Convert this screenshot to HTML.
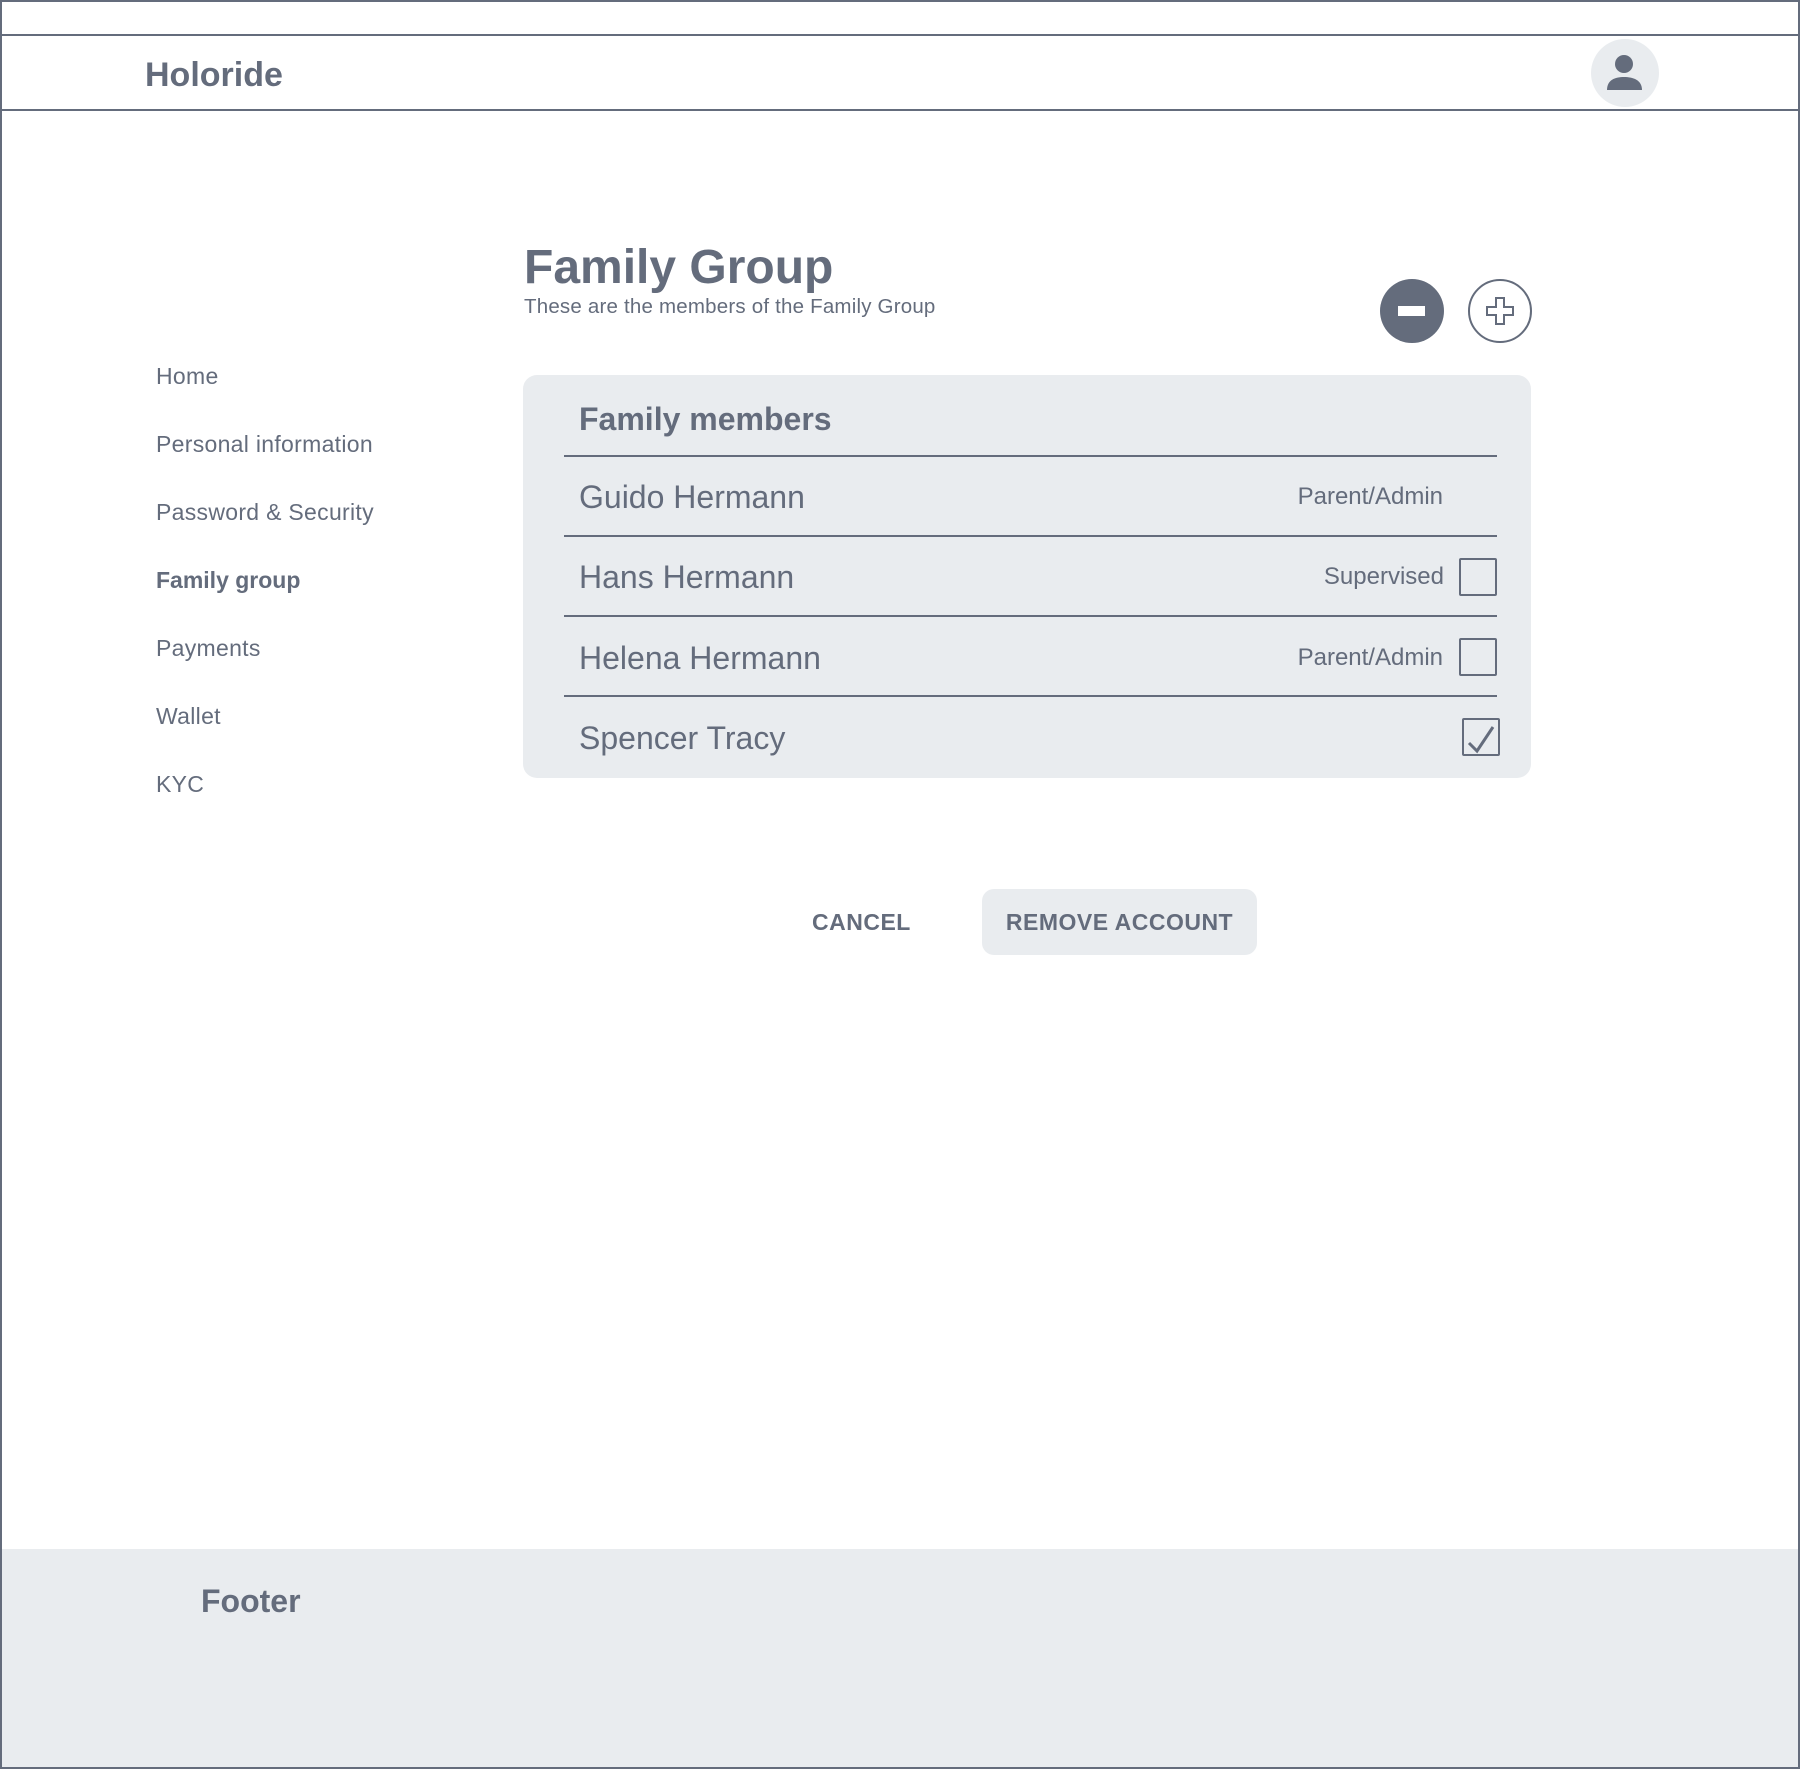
<!DOCTYPE html>
<html><head><meta charset="utf-8"><style>
*{margin:0;padding:0;box-sizing:border-box}
body{width:1800px;height:1769px;position:relative;background:#fff;font-family:"Liberation Sans",Arial,sans-serif;color:#646c7c;overflow:hidden}
.a{position:absolute;white-space:nowrap;line-height:1}
.b{font-weight:bold}
.ln{position:absolute;background:#646c7c}
.cb{position:absolute;width:38px;height:38px;border:2px solid #646c7c;border-radius:2px}
.s{font-size:23px;letter-spacing:0.3px}
</style></head><body>
<div style="position:absolute;left:0;top:0;width:1800px;height:1769px;border:2px solid #646c7c"></div>
<div class="ln" style="left:0;top:34px;width:1800px;height:2px"></div>
<div class="ln" style="left:0;top:109px;width:1800px;height:2px"></div>
<div class="a b" style="left:145px;top:58px;font-size:34px">Holoride</div>
<svg style="position:absolute;left:1591px;top:39px" width="68" height="68" viewBox="0 0 68 68"><circle cx="34" cy="34" r="34" fill="#e9ecef"/><circle cx="33" cy="25" r="9" fill="#646c7c"/><path d="M16 51 C16 41 24 38 33 38 C42 38 51 41 51 51 Z" fill="#646c7c"/></svg>

<div class="a b" style="left:524px;top:244px;font-size:48px">Family Group</div>
<div class="a" style="left:524px;top:297px;font-size:20.5px;letter-spacing:0.2px">These are the members of the Family Group</div>
<svg style="position:absolute;left:1378px;top:277px" width="160" height="68" viewBox="0 0 160 68"><circle cx="34" cy="34" r="32" fill="#646c7c"/><rect x="20" y="29" width="27" height="10" fill="#fff"/><circle cx="122" cy="34" r="31" fill="#fff" stroke="#646c7c" stroke-width="2"/><path d="M118 21 h8 v9 h9 v8 h-9 v9 h-8 v-9 h-9 v-8 h9 z" fill="none" stroke="#646c7c" stroke-width="2"/></svg>

<div class="a s" style="left:156px;top:365px">Home</div>
<div class="a s" style="left:156px;top:433px">Personal information</div>
<div class="a s" style="left:156px;top:501px">Password &amp; Security</div>
<div class="a s b" style="left:156px;top:569px;letter-spacing:0">Family group</div>
<div class="a s" style="left:156px;top:637px">Payments</div>
<div class="a s" style="left:156px;top:705px">Wallet</div>
<div class="a s" style="left:156px;top:773px">KYC</div>

<div style="position:absolute;left:523px;top:375px;width:1008px;height:403px;background:#e9ecef;border-radius:14px"></div>
<div class="a b" style="left:579px;top:403px;font-size:32px">Family members</div>
<div class="ln" style="left:564px;top:455px;width:933px;height:2px"></div>
<div class="ln" style="left:564px;top:535px;width:933px;height:2px"></div>
<div class="ln" style="left:564px;top:615px;width:933px;height:2px"></div>
<div class="ln" style="left:564px;top:695px;width:933px;height:2px"></div>
<div class="a" style="left:579px;top:481px;font-size:32px">Guido Hermann</div>
<div class="a" style="left:579px;top:561px;font-size:32px">Hans Hermann</div>
<div class="a" style="left:579px;top:642px;font-size:32px">Helena Hermann</div>
<div class="a" style="left:579px;top:722px;font-size:32px">Spencer Tracy</div>
<div class="a" style="right:357px;top:485px;font-size:24px">Parent/Admin</div>
<div class="a" style="right:356px;top:565px;font-size:24px">Supervised</div>
<div class="a" style="right:357px;top:646px;font-size:24px">Parent/Admin</div>
<div class="cb" style="left:1459px;top:558px"></div>
<div class="cb" style="left:1459px;top:638px"></div>
<div class="cb" style="left:1462px;top:718px"></div>
<svg style="position:absolute;left:1462px;top:718px" width="38" height="38" viewBox="0 0 38 38"><path d="M7 25 L15 33 L31 9" fill="none" stroke="#646c7c" stroke-width="3"/></svg>

<div class="a b" style="left:812px;top:911px;font-size:23px;letter-spacing:0.5px">CANCEL</div>
<div style="position:absolute;left:982px;top:889px;width:275px;height:66px;background:#e9ecef;border-radius:12px"></div>
<div class="a b" style="left:982px;width:275px;text-align:center;top:911px;font-size:23px;letter-spacing:0.5px">REMOVE ACCOUNT</div>

<div style="position:absolute;left:2px;top:1549px;width:1796px;height:218px;background:#e9ecef"></div>
<div class="a b" style="left:201px;top:1585px;font-size:32px">Footer</div>
</body></html>
